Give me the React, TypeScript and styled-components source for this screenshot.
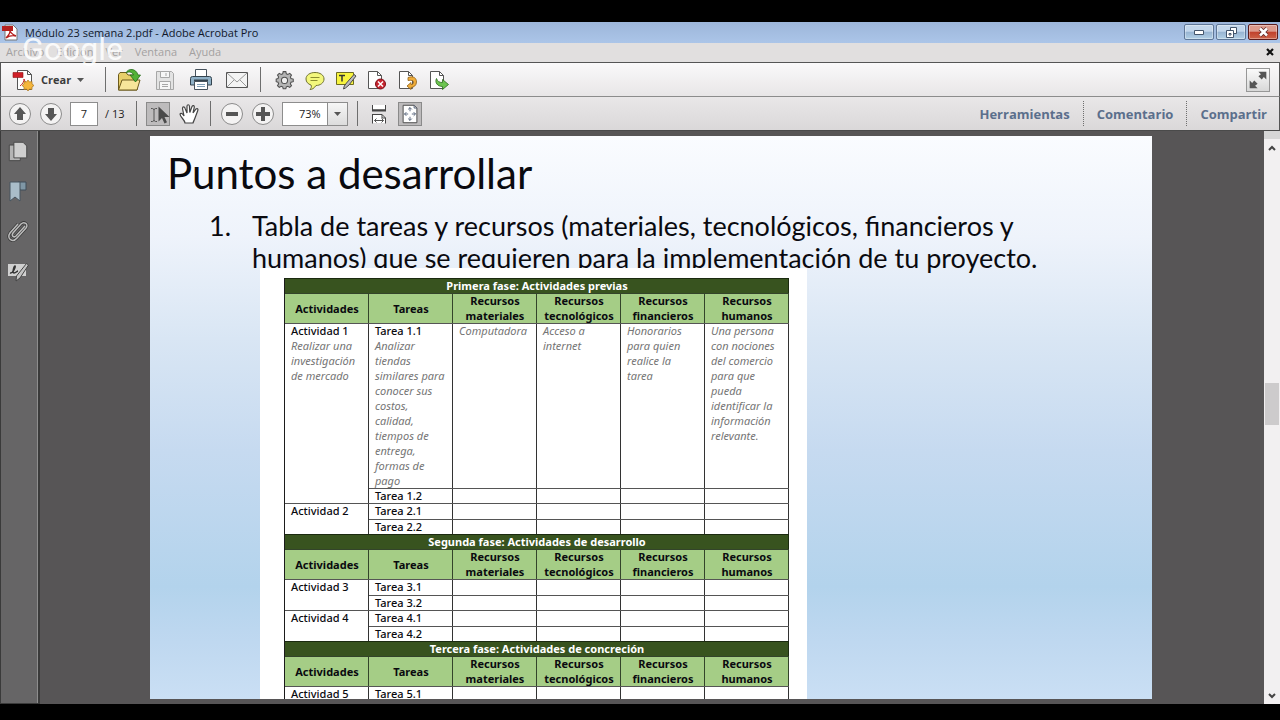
import React from "react";
import styled, { createGlobalStyle, css } from "styled-components";

const UI = `"Open Sans", "Noto Sans", sans-serif`;
const SLIDE = `Lato, "Noto Sans", sans-serif`;
const TABLE = `"Noto Sans", "Open Sans", sans-serif`;

const GlobalStyle = createGlobalStyle`
  * { box-sizing: border-box; }
  body { margin: 0; background: #000; font-family: ${UI}; font-size: 11px; color: #1c1c1c; }
  button, input, select { font: inherit; color: inherit; padding: 0; margin: 0; }
  svg { display: block; flex: none; }
`;

const Screen = styled.div`
  display: flex;
  flex-direction: column;
  height: 100vh;
  padding: 22px 0 16px;
  background: #000;
`;

const TitleBar = styled.header`
  display: flex;
  align-items: center;
  flex: none;
  gap: 6px;
  height: 21px;
  padding: 0 2px;
  background: linear-gradient(#9db6da, #abc5e8);
`;

const WindowTitle = styled.h1`
  flex: 1;
  margin: 0;
  font-size: 11px;
  line-height: 20px;
  font-weight: 400;
  color: #10182a;
`;

const WindowButtons = styled.div`
  display: flex;
  align-self: flex-start;
  gap: 2px;
  padding-top: 2px;
`;

const WindowButton = styled.button<{ $close?: boolean }>`
  display: grid;
  place-items: center;
  width: 30px;
  height: 16px;
  border: 1px solid ${(p) => (p.$close ? "#5b1c1c" : "#5f7797")};
  border-radius: 2px;
  background: ${(p) =>
    p.$close
      ? "linear-gradient(#dc9a8c 45%, #c0402c 50%, #cd6349)"
      : "linear-gradient(#c3d7ec 45%, #97b4d2 50%, #b2d0e6)"};
  box-shadow: inset 0 0 0 1px rgba(255, 255, 255, 0.35);
`;

const MenuBar = styled.nav`
  position: relative;
  display: flex;
  align-items: center;
  flex: none;
  gap: 12px;
  height: 19px;
  padding: 0 6px 2px;
  background: #e1dfdf;
`;

const MenuItem = styled.button`
  border: 0;
  background: none;
  line-height: 16px;
  color: #a3a1a1;
`;

const CloseDocument = styled.button`
  margin-left: auto;
  border: 0;
  background: none;
`;

const Watermark = styled.span`
  position: absolute;
  left: 22px;
  top: -12px;
  font-family: Roboto, sans-serif;
  font-size: 32px;
  line-height: 36px;
  color: rgba(255, 255, 255, 0.85);
  pointer-events: none;
`;

const Bar = styled.div`
  display: flex;
  align-items: center;
  flex: none;
  border: solid #555;
  border-width: 1px 1px 0;
`;

const FileBar = styled(Bar)`
  height: 34px;
  padding: 0 9px 0 10px;
  background: linear-gradient(#faf9fa, #e8e6e7);
`;

const PageBar = styled(Bar)`
  gap: 7px;
  height: 35px;
  padding: 0 12px 0 7px;
  border-top-color: #8c8c8c;
  border-bottom: 1px solid #4a4a4a;
  background: linear-gradient(#e9e7e8, #dad8d9);
`;

const Group = styled.div<{ $gap: number }>`
  display: flex;
  gap: ${(p) => p.$gap}px;
`;

const Divider = styled.span<{ $space: number; $dotted?: boolean }>`
  height: 25px;
  margin: 0 ${(p) => p.$space}px;
  border-left: 1px ${(p) => (p.$dotted ? "dotted" : "solid")} #6e6e6e;
`;

const IconButton = styled.button<{ $active?: boolean; $framed?: boolean }>`
  display: grid;
  place-items: center;
  width: 24px;
  height: 24px;
  border: 0;
  background: none;
  ${(p) =>
    p.$active &&
    css`
      border: 1px solid #8a8a8a;
      background: #bdbbbc;
    `}
  ${(p) =>
    p.$framed &&
    css`
      margin-left: auto;
      border: 1px solid #979797;
      background: linear-gradient(#fafafa, #d8d8d8);
    `}
`;

const CreateButton = styled.button`
  display: flex;
  align-items: center;
  gap: 6px;
  width: 83px;
  height: 26px;
  border: 0;
  background: none;
  font-size: 11px;
  font-weight: 700;
  color: #3c3c3c;
`;

const PageInput = styled.input`
  width: 28px;
  height: 24px;
  border: 1px solid #8d8d8d;
  background: #fff;
  text-align: center;
`;

const PageTotal = styled.span`
  width: 22px;
  white-space: nowrap;
`;

const ZoomBox = styled.div`
  position: relative;
  width: 66px;
  height: 24px;
`;

const ZoomSelect = styled.select`
  appearance: none;
  width: 100%;
  height: 100%;
  padding-left: 16px;
  border: 1px solid #8d8d8d;
  border-radius: 0;
  background: #fff;
`;

const ZoomArrow = styled.span`
  position: absolute;
  inset: 1px 1px 1px auto;
  display: grid;
  place-items: center;
  width: 20px;
  border-left: 1px solid #8d8d8d;
  background: linear-gradient(#f6f6f6, #dcdcdc);
  pointer-events: none;
`;

const Panes = styled.div`
  display: flex;
  align-items: center;
  margin-left: auto;
`;

const PaneButton = styled.button`
  border: 0;
  background: none;
  font-size: 13px;
  line-height: 24px;
  font-weight: 700;
  color: #5b6f8c;
`;

const Workspace = styled.div`
  display: flex;
  flex: 1;
  min-height: 0;
  background: #575556;
`;

const SideBar = styled.aside`
  display: flex;
  flex-direction: column;
  align-items: center;
  flex: none;
  gap: 16px;
  width: 40px;
  padding: 8px 4px 0 0;
  border: solid #3a3a3a;
  border-width: 0 2px 1px 1px;
  background: #666566;
  box-shadow: inset -1px 0 0 #8d8d8d;
`;

const Viewport = styled.main`
  flex: 1;
  min-width: 0;
  padding: 5px 112px 5px 110px;
`;

const Slide = styled.article`
  height: 100%;
  overflow: hidden;
  padding: 12px 0 0 17px;
  background: linear-gradient(
    #fafcff 0%,
    #eef3fb 18%,
    #d9e6f4 36%,
    #c6daf0 56%,
    #b3d3ec 80%,
    #bfd8f0 90%,
    #cadff4 100%
  );
  font-family: ${SLIDE};
  color: #0a0a0f;
`;

const SlideTitle = styled.h2`
  margin: 0;
  font-size: 42px;
  line-height: 50px;
  font-weight: 400;
`;

const Points = styled.ol`
  height: 70px;
  margin: 0;
  padding: 12px 60px 0 71px;
  font-size: 27px;
  line-height: 32px;
`;

const Point = styled.li`
  padding-left: 14px;
  white-space: nowrap;
`;

const Figure = styled.div`
  position: relative;
  width: 547px;
  margin-left: 93px;
  padding: 10px 18px 0 24px;
  background: #fff;
`;

const TaskTable = styled.table`
  width: 100%;
  table-layout: fixed;
  border-spacing: 0;
  border-left: 1px solid #1b1b1b;
  font-family: ${TABLE};
  font-size: 11px;
  line-height: 15px;
`;

const PhaseCell = styled.th`
  height: 15px;
  padding: 0;
  background: #38531f;
  box-shadow: inset 0 1px 0 #1b2a10, inset -1px 0 0 #1b2a10;
  color: #fff;
`;

const HeadCell = styled.th`
  height: 30px;
  padding: 0;
  background: #a5cd86;
  box-shadow: inset 0 1px 0 #33442a, inset -1px 0 0 #33442a;
`;

const Cell = styled.td<{ $tall?: boolean }>`
  height: ${(p) => (p.$tall ? 16 : 15)}px;
  padding: 0 0 0 6px;
  vertical-align: top;
  font-weight: 500;
  box-shadow: inset 0 1px 0 #555, inset -1px 0 0 #333;
`;

const Note = styled.em`
  display: block;
  font-weight: 400;
  color: #757575;
`;

const ScrollBar = styled.div`
  display: flex;
  flex-direction: column;
  align-items: center;
  flex: none;
  width: 16px;
  border-top: 8px solid #d6d6d6;
  background: #f2f0f1;
`;

const ScrollButton = styled.button`
  display: grid;
  place-items: center;
  width: 16px;
  height: 17px;
  border: 0;
  background: none;
`;

const ScrollTrack = styled.div`
  display: flex;
  flex-direction: column;
  flex: 1;
  width: 14px;
  &::before { content: ""; flex: 227; }
  &::after { content: ""; flex: 262; }
`;

const ScrollThumb = styled.div`
  height: 42px;
  background: #cdcbcc;
`;

const Arrow = () => (
  <svg width="7" height="4" viewBox="0 0 7 4"><path d="M0 0h7L3.5 4z" fill="#555" /></svg>
);

const Icon = ({ size = 24, children }: { size?: number; children: React.ReactNode }) => (
  <svg width={size} height={size} viewBox="0 0 24 24" fill="none" aria-hidden="true">{children}</svg>
);

const PdfIcon = () => (
  <svg width="17" height="17" viewBox="0 0 17 17" aria-hidden="true">
    <path d="M3 1h8l4 4v11H3z" fill="#fff" stroke="#777" />
    <path d="M0 2h11v5H0z" fill="#b5201f" />
    <path d="M4 14c3-3 5-7 4-10-1 4 3 7 6 8-4-1-7 0-10 2z" fill="none" stroke="#b5201f" strokeWidth="1.4" />
  </svg>
);

const CreateIcon = () => (
  <Icon>
    <path d="M6.500 2.500h10l4 4v15h-14z" fill="#fff" stroke="#555" />
    <path d="M16.500 2.500v4h4" stroke="#555" />
    <path d="M2 4.500h10v5H2z" fill="#cf2028" stroke="#8e1414" strokeWidth=".6" />
    <path d="M9 18c3-2 4-5 4-7 1 3 2 4 4 5" stroke="#c62b2b" />
    <path d="M17 12l1.500 2 2.500-.5v2.500l2 1.500-2 1.500v2.500l-2.500-.5-1.500 2-1.500-2-2.500.5V19l-2-1.500 2-1.500v-2.500l2.500.5z" fill="#f5b63c" stroke="#a8731c" strokeWidth=".7" />
  </Icon>
);

const OpenIcon = () => (
  <Icon>
    <path d="M1.500 22V6.500L3 4.500h6l2 2.500h9V22z" fill="#e8cf6a" stroke="#6d5b1d" />
    <path d="M1.500 22l3.500-10h18l-3 10z" fill="#f7e69a" stroke="#6d5b1d" />
    <path d="M9 5c2-5 10-5 12 2h2.500L18.500 14 13 7h3.500c-1-3-5-4-7.500-2z" fill="#52b135" stroke="#256b18" strokeWidth=".8" />
  </Icon>
);

const SaveIcon = () => (
  <Icon>
    <path d="M3.500 3.500h15l2 2v16h-17z" fill="#e3e3e3" stroke="#a7a7a7" />
    <path d="M7.500 3.500h9v6h-9zM6.500 13.500h11v8h-11z" fill="#f7f7f7" stroke="#a7a7a7" />
    <path d="M13 5v3M9 16.500h6M9 18.500h6" stroke="#a7a7a7" />
  </Icon>
);

const PrintIcon = () => (
  <Icon>
    <path d="M6.500 10V1.500h11V10" fill="#fff" stroke="#47525c" />
    <path d="M3.500 8.500h17a2 2 0 0 1 2 2v6.500h-21v-6.500a2 2 0 0 1 2-2z" fill="#8fb0c6" stroke="#34444f" />
    <path d="M5 12.500h14" stroke="#34444f" strokeWidth="2" />
    <path d="M5.500 13.500h13v8h-13z" fill="#fff" stroke="#47525c" />
    <path d="M8 16.500h8M8 18.500h8" stroke="#7f9db5" />
  </Icon>
);

const MailIcon = () => (
  <Icon>
    <path d="M1.500 4.500h21v15h-21z" fill="#f4f4f4" stroke="#555" />
    <path d="M2 5l10 9L22 5M2 19l7-7M22 19l-7-7" stroke="#999" />
  </Icon>
);

const GearIcon = () => (
  <Icon size={21}>
    <path d="M10.500 3h3l.6 2.500 1.700.7L18 5l2 2-1.300 2.200.7 1.700 2.600.6v3l-2.600.6-.7 1.700L20 19l-2 2-2.200-1.300-1.700.7-.6 2.100h-3l-.6-2.100-1.700-.7L6 21l-2-2 1.300-2.200-.7-1.700L2.500 14.500v-3l2.100-.6.700-1.700L4 7l2-2 2.200 1.200 1.700-.7z" fill="#b4b4b4" stroke="#505050" strokeWidth="1.200" />
    <circle cx="12" cy="13" r="3.500" fill="#efefef" stroke="#505050" strokeWidth="1.200" />
  </Icon>
);

const CommentIcon = () => (
  <Icon>
    <path d="M12 4.500c5 0 9 2.500 9 6.500s-4 6.500-8 6.500c-2 3-4 4-6 4 1-1 2-3 1-4.500-3-1-5-3-5-6 0-4 4-6.500 9-6.500z" fill="#f3f77c" stroke="#6f7130" />
    <path d="M7.500 9.500h9M7.500 12.500h7" stroke="#8b8d2f" />
  </Icon>
);

const HighlightIcon = () => (
  <Icon>
    <path d="M2.500 4.500h17v12h-17z" fill="#f8f43f" stroke="#6d6b23" />
    <path d="M5 7.500h6M8 7.500v6" stroke="#333" strokeWidth="1.500" />
    <path d="M20 6.500l2 1.500-7 9-3.500 3-2 1 .8-3 2.200-3z" fill="#bcbcbc" stroke="#4a4a4a" />
  </Icon>
);

const DocShape = () => (
  <>
    <path d="M3.500 3.500h9l4 4v13h-13z" fill="#fff" stroke="#555" />
    <path d="M12.500 3.500v4h4" stroke="#555" />
  </>
);

const DocDeleteIcon = () => (
  <Icon>
    <DocShape />
    <circle cx="15.500" cy="16" r="5" fill="#c8242f" stroke="#7e1119" />
    <path d="M13 13.500l5 5M18 13.500l-5 5" stroke="#fff" strokeWidth="1.500" />
  </Icon>
);

const DocRotateIcon = () => (
  <Icon>
    <DocShape />
    <path d="M12 9.500c6-2 8.500 1 8.500 4.500s-3 5.500-5.500 5.500v2L11 18l4-3.500v2c2 0 2.500-1 2.500-2.500s-2-2-5.500-1.500z" fill="#f0ad3a" stroke="#8f5f16" strokeWidth=".8" />
  </Icon>
);

const DocExportIcon = () => (
  <Icon>
    <DocShape />
    <path d="M9.500 10.500c1 3 3 4 6 4v-3l6 5-6 5v-3c-5 0-8-4-6-8z" fill="#6cc44f" stroke="#2a6a1b" strokeWidth=".8" />
  </Icon>
);

const ExpandIcon = () => (
  <Icon size={20}>
    <path d="M12.500 2H22v9.500l-3-3-2.500 3-4-4 3-2.500zM2 22v-9.500l3 3 2.500-3 4 4-3 2.500 3 3z" fill="#555" />
  </Icon>
);

const CircleIcon = ({ d }: { d: string }) => (
  <Icon>
    <circle cx="12" cy="12" r="10.500" fill="#f4f3f3" stroke="#8b8b8b" />
    <path d={d} fill="#565656" />
  </Icon>
);

const SelectIcon = () => (
  <Icon>
    <path d="M4 5.500h1.500l1.500 1 1.500-1H10M7 6v12M4 18.500h1.500l1.500-1 1.500 1H10" stroke="#555" />
    <path d="M11.500 3.500v15l3.500-3.500 2.500 5.500 2.500-1.200L17.500 14h5z" fill="#4a4a4a" />
  </Icon>
);

const HandIcon = () => (
  <Icon>
    <path d="M8 21c0-3-5-6-5-9 1-1.500 2.500-.5 4 2L5.500 6.500c0-2 2-2 2.500-.3L10 11V4c.2-1.700 2.200-1.700 2.400 0l.4 6.500L15 4.500c.8-1.500 2.500-1 2.300.7L16 11l3-4c1.200-1 2.400 0 1.800 1.500L18 16c-.6 2-1.500 3-2 5z" fill="#fff" stroke="#444" strokeWidth="1.200" />
  </Icon>
);

const FitWidthIcon = () => (
  <Icon>
    <path d="M5.500 3v5h13V3" fill="#fff" stroke="#444" />
    <path d="M5 8.500h14" stroke="#444" strokeWidth="2" />
    <path d="M5.500 21v-8h9.500l3.500 3.500V21z" fill="#fff" />
    <path d="M5.500 21.500v-9M5 12.500h10l3.500 3.500v5.500M15 12.500V16h3.500" stroke="#444" />
    <path d="M7.500 18.500h9M9.500 16.500l-2 2 2 2M14.500 16.500l2 2-2 2" stroke="#555" />
  </Icon>
);

const FitPageIcon = () => (
  <Icon size={22}>
    <path d="M4.500 2.500h12l3 3v16h-15z" fill="#fff" stroke="#444" />
    <path d="M16.500 2.500v3h3M12 5v4M10 7l2-2 2 2M12 15v4M10 17l2 2 2-2M6 12h4M8 10l-2 2 2 2M14 12h4M16 10l2 2-2 2" stroke="#4f5d74" />
  </Icon>
);

const PagesIcon = () => (
  <Icon size={22}>
    <path d="M2.500 5.500h12v17h-12z" fill="#b4b4b4" stroke="#444" />
    <path d="M7.500 2.500h10l4 4v13h-14z" fill="#cfcfcf" stroke="#444" />
  </Icon>
);

const BookmarkIcon = () => (
  <Icon>
    <path d="M12 3h8v8h-6z" fill="#7f97a6" stroke="#3f4d58" />
    <path d="M4 3h10v19l-5-4-5 4z" fill="#a9bdc9" stroke="#46545f" />
  </Icon>
);

const ClipIcon = () => (
  <Icon>
    <path d="M19 7l-9 10c-2 2-5 0-3-3l8-9c3-3 8 0 5 4L11 19c-4 5-11 1-7-5l8-9" stroke="#383838" strokeWidth="3" />
    <path d="M19 7l-9 10c-2 2-5 0-3-3l8-9c3-3 8 0 5 4L11 19c-4 5-11 1-7-5l8-9" stroke="#bcbcbc" strokeWidth="1.500" />
  </Icon>
);

const SignIcon = () => (
  <Icon>
    <path d="M2 5h18v12H2z" fill="#d0d0d0" />
    <path d="M4 14c3 1 6-7 5-7s-3 7-1 7 3-2 4-2" stroke="#333" strokeWidth="1.500" />
    <path d="M20.500 4.500l2 1.500L14 19l-4 3 .5-5z" fill="#c4c4c4" stroke="#444" />
  </Icon>
);

const menus = ["Archivo", "Edición", "Ver", "Ventana", "Ayuda"];
const fileTools: [string, React.FC][] = [
  ["Abrir", OpenIcon], ["Guardar", SaveIcon], ["Imprimir", PrintIcon], ["Correo electrónico", MailIcon],
];
const editTools: [string, React.FC][] = [
  ["Preferencias", GearIcon], ["Nota", CommentIcon], ["Resaltar texto", HighlightIcon],
  ["Eliminar páginas", DocDeleteIcon], ["Rotar páginas", DocRotateIcon], ["Extraer páginas", DocExportIcon],
];
const sideTools: [string, React.FC][] = [
  ["Miniaturas", PagesIcon], ["Marcadores", BookmarkIcon], ["Adjuntos", ClipIcon], ["Firmas", SignIcon],
];

const headings = [
  ["Actividades"], ["Tareas"], ["Recursos", "materiales"], ["Recursos", "tecnológicos"],
  ["Recursos", "financieros"], ["Recursos", "humanos"],
];

type Task = { name: string; notes?: string[][] };
type Activity = { name: string; note?: string[]; tasks: Task[] };

const phases: { title: string; activities: Activity[] }[] = [
  {
    title: "Primera fase: Actividades previas",
    activities: [
      {
        name: "Actividad 1",
        note: ["Realizar una", "investigación", "de mercado"],
        tasks: [
          {
            name: "Tarea 1.1",
            notes: [
              ["Analizar", "tiendas", "similares para", "conocer sus", "costos,", "calidad,", "tiempos de", "entrega,", "formas de", "pago"],
              ["Computadora"],
              ["Acceso a", "internet"],
              ["Honorarios", "para quien", "realice la", "tarea"],
              ["Una persona", "con nociones", "del comercio", "para que", "pueda", "identificar la", "información", "relevante."],
            ],
          },
          { name: "Tarea 1.2" },
        ],
      },
      { name: "Actividad 2", tasks: [{ name: "Tarea 2.1" }, { name: "Tarea 2.2" }] },
    ],
  },
  {
    title: "Segunda fase: Actividades de desarrollo",
    activities: [
      { name: "Actividad 3", tasks: [{ name: "Tarea 3.1" }, { name: "Tarea 3.2" }] },
      { name: "Actividad 4", tasks: [{ name: "Tarea 4.1" }, { name: "Tarea 4.2" }] },
    ],
  },
  {
    title: "Tercera fase: Actividades de concreción",
    activities: [{ name: "Actividad 5", tasks: [{ name: "Tarea 5.1" }] }],
  },
];

const Lines = ({ lines }: { lines?: string[] }) => (
  <>{lines?.map((line) => <Note key={line}>{line}</Note>)}</>
);

const PhaseRows = ({ title, activities }: (typeof phases)[number]) => (
  <tbody>
    <tr><PhaseCell colSpan={6}>{title}</PhaseCell></tr>
    <tr>
      {headings.map((words) => (
        <HeadCell key={words.join()}>
          {words.map((word, i) => <React.Fragment key={word}>{i > 0 && <br />}{word}</React.Fragment>)}
        </HeadCell>
      ))}
    </tr>
    {activities.map((activity) =>
      activity.tasks.map((task, i) => (
        <tr key={task.name}>
          {i === 0 && (
            <Cell rowSpan={activity.tasks.length}>{activity.name}<Lines lines={activity.note} /></Cell>
          )}
          <Cell $tall={i === 0}>{task.name}<Lines lines={task.notes?.[0]} /></Cell>
          {[1, 2, 3, 4].map((n) => <Cell key={n}><Lines lines={task.notes?.[n]} /></Cell>)}
        </tr>
      ))
    )}
  </tbody>
);

export default function App() {
  return (
    <Screen>
      <GlobalStyle />
      <TitleBar>
        <PdfIcon />
        <WindowTitle>Módulo 23 semana 2.pdf - Adobe Acrobat Pro</WindowTitle>
        <WindowButtons>
          <WindowButton aria-label="Minimizar">
            <svg width="10" height="5"><path d="M.5.500h9v4h-9z" fill="#fff" stroke="#44566c" /></svg>
          </WindowButton>
          <WindowButton aria-label="Restaurar">
            <svg width="11" height="11" fill="#fff" stroke="#44566c">
              <path d="M4.500.500h6v6h-6z" /><path d="M.5 3.500h7v7h-7z" /><path d="M3 6.500h2v1.500H3z" />
            </svg>
          </WindowButton>
          <WindowButton $close aria-label="Cerrar">
            <svg width="11" height="10">
              <path d="M2 1.500l7 7M9 1.500l-7 7" stroke="#5d2a2a" strokeWidth="4" />
              <path d="M2 1.500l7 7M9 1.500l-7 7" stroke="#fff" strokeWidth="2.500" />
            </svg>
          </WindowButton>
        </WindowButtons>
      </TitleBar>
      <MenuBar>
        {menus.map((name) => <MenuItem key={name}>{name}</MenuItem>)}
        <CloseDocument aria-label="Cerrar documento">
          <svg width="8" height="8"><path d="M1 1l6 6M7 1L1 7" stroke="#111" strokeWidth="2.200" /></svg>
        </CloseDocument>
        <Watermark>Google</Watermark>
      </MenuBar>
      <FileBar>
        <CreateButton><CreateIcon />Crear<Arrow /></CreateButton>
        <Divider $space={11} />
        <Group $gap={12}>
          {fileTools.map(([name, Glyph]) => <IconButton key={name} aria-label={name}><Glyph /></IconButton>)}
        </Group>
        <Divider $space={11} />
        <Group $gap={7}>
          {editTools.map(([name, Glyph]) => (
            <IconButton key={name} aria-label={name}><Glyph /></IconButton>
          ))}
        </Group>
        <IconButton $framed aria-label="Modo de lectura"><ExpandIcon /></IconButton>
      </FileBar>
      <PageBar>
        <IconButton aria-label="Página anterior"><CircleIcon d="M12 5l6 7h-3v6H9v-6H6z" /></IconButton>
        <IconButton aria-label="Página siguiente"><CircleIcon d="M12 19l6-7h-3V6H9v6H6z" /></IconButton>
        <PageInput aria-label="Página" defaultValue="7" />
        <PageTotal>/ 13</PageTotal>
        <Divider $space={2} />
        <IconButton $active aria-label="Seleccionar"><SelectIcon /></IconButton>
        <IconButton aria-label="Mano"><HandIcon /></IconButton>
        <Divider $space={2} />
        <IconButton aria-label="Reducir"><CircleIcon d="M6 10h12v4H6z" /></IconButton>
        <IconButton aria-label="Ampliar"><CircleIcon d="M10 5h4v5h5v4h-5v5h-4v-5H5v-4h5z" /></IconButton>
        <ZoomBox>
          <ZoomSelect aria-label="Zoom" defaultValue="73%"><option>73%</option></ZoomSelect>
          <ZoomArrow><Arrow /></ZoomArrow>
        </ZoomBox>
        <Divider $space={2} />
        <IconButton aria-label="Ajustar al ancho"><FitWidthIcon /></IconButton>
        <IconButton $active aria-label="Ajustar página"><FitPageIcon /></IconButton>
        <Panes>
          <PaneButton>Herramientas</PaneButton>
          <Divider $space={13} $dotted />
          <PaneButton>Comentario</PaneButton>
          <Divider $space={13} $dotted />
          <PaneButton>Compartir</PaneButton>
        </Panes>
      </PageBar>
      <Workspace>
        <SideBar>
          {sideTools.map(([name, Glyph]) => <IconButton key={name} aria-label={name}><Glyph /></IconButton>)}
        </SideBar>
        <Viewport>
          <Slide>
            <SlideTitle>Puntos a desarrollar</SlideTitle>
            <Points>
              <Point>
                Tabla de tareas y recursos (materiales, tecnológicos, financieros y<br />
                humanos) que se requieren para la implementación de tu proyecto.
              </Point>
            </Points>
            <Figure>
              <TaskTable>
                {phases.map((phase) => <PhaseRows key={phase.title} {...phase} />)}
              </TaskTable>
            </Figure>
          </Slide>
        </Viewport>
        <ScrollBar>
          <ScrollButton aria-label="Subir">
            <svg width="8" height="6" fill="none"><path d="M1 5l3-3 3 3" stroke="#444" strokeWidth="2" /></svg>
          </ScrollButton>
          <ScrollTrack><ScrollThumb /></ScrollTrack>
          <ScrollButton aria-label="Bajar">
            <svg width="8" height="6" fill="none"><path d="M1 1l3 3 3-3" stroke="#444" strokeWidth="2" /></svg>
          </ScrollButton>
        </ScrollBar>
      </Workspace>
    </Screen>
  );
}
